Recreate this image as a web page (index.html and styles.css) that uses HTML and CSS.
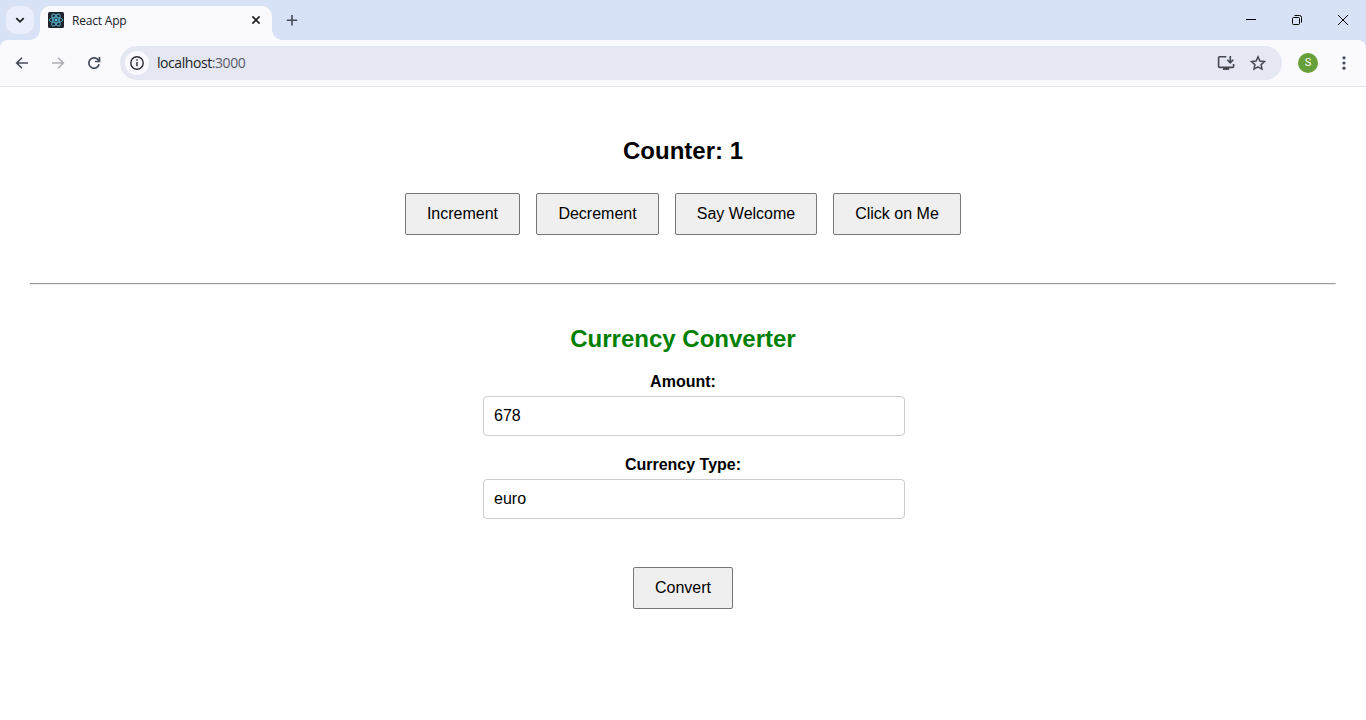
FILE: index.html
```html
<!DOCTYPE html>
<html lang="en">
<head>
<meta charset="utf-8">
<title>React App</title>
<link rel="stylesheet" href="styles.css">
</head>
<body>
<header class="browser">
  <div class="tab-strip">
    <div class="tab-search">
      <svg width="28" height="28" viewBox="0 0 28 28" fill="none" stroke="#1f2024" stroke-width="1.8"><path d="M10.3 12.2l3.7 3.6 3.7-3.6"/></svg>
    </div>
    <div class="tab">
      <svg class="favicon" width="16" height="16" viewBox="0 0 16 16">
        <rect width="16" height="16" rx="1.5" fill="#20232a"/>
        <g fill="none" stroke="#53b5cf" stroke-width=".9">
          <ellipse cx="8" cy="8" rx="6.7" ry="2.6"/>
          <ellipse cx="8" cy="8" rx="6.7" ry="2.6" transform="rotate(60 8 8)"/>
          <ellipse cx="8" cy="8" rx="6.7" ry="2.6" transform="rotate(120 8 8)"/>
        </g>
        <circle cx="8" cy="8" r="1.3" fill="#61dafb"/>
      </svg>
      <span class="tab-title">React App</span>
      <svg class="tab-close" width="16" height="16" viewBox="0 0 16 16" stroke="#1f2024" stroke-width="1.6"><path d="M4.4 4.4l7.2 7.2M11.6 4.4l-7.2 7.2"/></svg>
    </div>
    <svg class="new-tab" width="16" height="16" viewBox="0 0 16 16" stroke="#444b59" stroke-width="1.6"><path d="M8 3v10.4M2.8 8.2h10.4"/></svg>
    <div class="window-controls">
      <svg width="46" height="40" viewBox="0 0 46 40" stroke="#000"><path d="M18 19.5h10"/></svg>
      <svg width="46" height="40" viewBox="0 0 46 40" fill="none" stroke="#000"><rect x="18.5" y="17.5" width="7" height="7" rx="1"/><path d="M20.5 15.5h5a2 2 0 0 1 2 2v5"/></svg>
      <svg width="46" height="40" viewBox="0 0 46 40" stroke="#000"><path d="M18 15l10 10M28 15l-10 10"/></svg>
    </div>
  </div>
  <div class="toolbar">
    <svg class="nav" width="20" height="20" viewBox="0 0 20 20" fill="none" stroke="#444b59" stroke-width="1.6"><path d="M16 10H5M10 4.7L4.7 10l5.3 5.3"/></svg>
    <svg class="nav" width="20" height="20" viewBox="0 0 20 20" fill="none" stroke="#adaeb4" stroke-width="1.6"><path d="M4 10h11M10 4.7l5.3 5.3-5.3 5.3"/></svg>
    <svg class="nav" width="20" height="20" viewBox="0 0 20 20" fill="none" stroke="#444b59" stroke-width="1.7"><path d="M15.1 11.3A5.2 5.2 0 1 1 13.8 6.4L15 7.7M15.5 4v4.5H11"/></svg>
    <div class="address">
      <div class="site-info">
        <svg width="24" height="24" viewBox="0 0 24 24" fill="none" stroke="#292b31" stroke-width="1.4"><circle cx="12" cy="12" r="6.2"/><path d="M12 11v4.2M12 8.3v1.5"/></svg>
      </div>
      <span class="url">localhost<span class="port">:3000</span></span>
      <svg class="install" width="20" height="20" viewBox="0 0 20 20" fill="none" stroke="#45484f" stroke-width="1.6"><path d="M10.3 3.8H3.6a1 1 0 0 0-1 1v8.6a1 1 0 0 0 1 1h13a1 1 0 0 0 1-1V11M14.3 3v6.4M11.3 6.8l3 3 3-3"/><path d="M7 15.9h6.2" stroke-width="2"/></svg>
      <svg class="star" width="20" height="20" viewBox="0 0 20 20" fill="none" stroke="#45484f" stroke-width="1.5"><path d="M10 3.8l1.9 4.2 4.6.5-3.4 3.1.9 4.5-4-2.3-4 2.3.9-4.5-3.4-3.1 4.6-.5z"/></svg>
    </div>
    <div class="avatar">S</div>
    <svg class="menu" width="20" height="20" viewBox="0 0 20 20" fill="#444b59"><circle cx="10" cy="4.8" r="1.6"/><circle cx="10" cy="10" r="1.6"/><circle cx="10" cy="15.2" r="1.6"/></svg>
  </div>
</header>
<main class="page">
  <h2 class="heading">Counter: 1</h2>
  <div class="actions">
    <button class="btn increment">Increment</button>
    <button class="btn decrement">Decrement</button>
    <button class="btn welcome">Say Welcome</button>
    <button class="btn click">Click on Me</button>
  </div>
  <hr class="divider">
  <h2 class="heading converter-title">Currency Converter</h2>
  <form class="converter">
    <label class="label" for="amount">Amount:</label>
    <input class="field" id="amount" type="text" value="678">
    <label class="label" for="currency">Currency Type:</label>
    <input class="field" id="currency" type="text" value="euro">
    <button class="btn convert" type="button">Convert</button>
  </form>
</main>
</body>
</html>
```
FILE: styles.css
```css
* { box-sizing: border-box; }
body {
  margin: 0;
  height: 720px;
  overflow: hidden;
  background: #fff;
  color: #000;
  font: 16px/18px "Liberation Sans", Arial, sans-serif;
}
svg { display: block; flex: none; }

.browser {
  height: 87px;
  background: #d8e2f6;
  font-family: "Open Sans", "Noto Sans", sans-serif;
}
.tab-strip { display: flex; height: 40px; }
.tab-search {
  width: 28px;
  height: 28px;
  margin: 6px 6px 0;
  border-radius: 10px;
  background: #ebeffd;
}
.tab {
  position: relative;
  display: flex;
  align-items: center;
  width: 232px;
  height: 34px;
  margin-top: 6px;
  padding: 0 8px 6px;
  border-radius: 10px 10px 0 0;
  background: #faf9fe;
}
.tab::before,
.tab::after {
  content: "";
  position: absolute;
  bottom: 0;
  width: 10px;
  height: 10px;
}
.tab::before { left: -10px; background: radial-gradient(circle at 0 0, transparent 9.5px, #faf9fe 10px); }
.tab::after { right: -10px; background: radial-gradient(circle at 100% 0, transparent 9.5px, #faf9fe 10px); }
.tab-title { margin-left: 8px; padding-top: 2px; font-size: 12px; letter-spacing: -.2px; color: #202124; }
.tab-close { margin-left: auto; }
.new-tab { margin: 12px 0 0 12px; }
.window-controls { display: flex; width: 138px; margin-left: auto; }

.toolbar {
  display: flex;
  align-items: center;
  height: 47px;
  padding: 0 12px;
  border-bottom: 1px solid #e3e4ec;
  border-radius: 8px 8px 0 0;
  background: #faf9fe;
}
.nav { margin-right: 16px; }
.address {
  display: flex;
  align-items: center;
  width: 1162px;
  height: 34px;
  padding: 0 14px 0 5px;
  border-radius: 17px;
  background: #e5e8f3;
}
.site-info {
  width: 24px;
  height: 24px;
  border-radius: 50%;
  background: #faf9fe;
}
.url { margin-left: 8px; font-size: 14px; letter-spacing: -.43px; color: #202124; }
.port { color: #5a5d66; }
.install { margin-left: auto; }
.star { margin-left: 12px; }
.avatar {
  width: 20px;
  height: 20px;
  margin-left: 16px;
  border-radius: 50%;
  background: #679f38;
  color: #fff;
  font: 11px/20px Roboto, sans-serif;
  text-align: center;
}
.menu { margin-left: 16px; }

.page { padding: 50px 30px 0; text-align: center; }
.heading { margin: 0; font-size: 24px; line-height: 27px; }
.actions {
  display: flex;
  justify-content: center;
  gap: 16px;
  margin-top: 29px;
}
.btn {
  height: 42px;
  padding: 0 0 1px;
  border: 1px solid #767676;
  border-radius: 2px;
  background: #efefef;
  color: #000;
  font: inherit;
}
.increment { width: 115px; }
.decrement { width: 123px; }
.welcome { width: 142px; }
.click { width: 128px; }
.divider {
  margin: 48px 0 40px;
  border: 1px solid;
  border-color: #9a9a9a #eee #eee #9a9a9a;
}
.converter-title { color: #008000; }
.converter {
  display: flex;
  flex-direction: column;
  width: 400px;
  margin: 21px auto 0;
}
.label { font-weight: bold; }
.field {
  width: 422px;
  height: 40px;
  margin: 5px 0 20px;
  padding: 0 10px 1px;
  border: 1px solid #ccc;
  border-radius: 4px;
  background: #fff;
  color: #000;
  font: inherit;
}
.convert { width: 100px; margin: 28px auto 0; }
```
